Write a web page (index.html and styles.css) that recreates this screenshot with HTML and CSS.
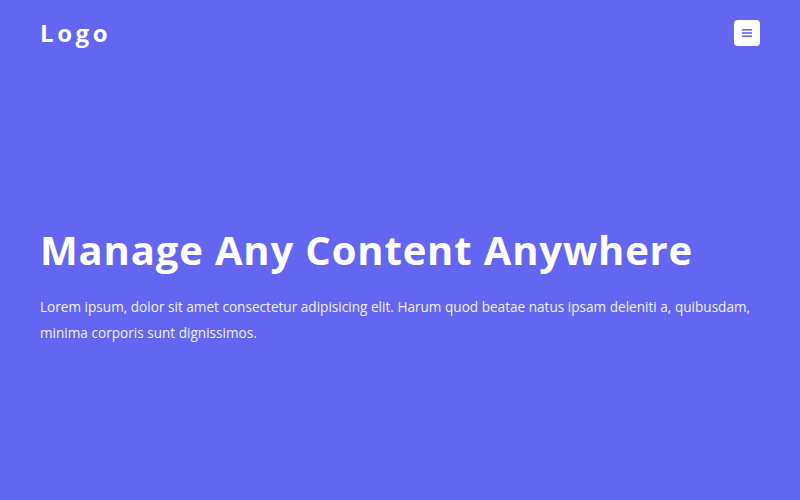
FILE: index.html
```html
<!DOCTYPE html>
<html lang="en">
<head>
<meta charset="utf-8">
<link rel="stylesheet" href="styles.css">
</head>
<body>
<div class="page">
  <header class="header">
    <div class="logo">Logo</div>
    <button class="menu-btn" aria-label="menu">
      <svg width="10" height="8" viewBox="0 0 10 8"><rect x="0" y="0" width="10" height="1.6" fill="#6366f1"/><rect x="0" y="3.2" width="10" height="1.6" fill="#6366f1"/><rect x="0" y="6.4" width="10" height="1.6" fill="#6366f1"/></svg>
    </button>
  </header>
  <main class="hero">
    <h1 class="title">Manage Any Content Anywhere</h1>
    <p class="lead">Lorem ipsum, dolor sit amet consectetur adipisicing elit. Harum quod beatae natus ipsam deleniti a, quibusdam, minima corporis sunt dignissimos.</p>
  </main>
</div>
</body>
</html>
```
FILE: styles.css
```css
* { box-sizing: border-box; }
html, body { margin: 0; padding: 0; }
body {
  background: #6366f1;
  font-family: "Open Sans", sans-serif;
  color: #fff;
}
.page {
  height: 500px;
  display: flex;
  flex-direction: column;
  padding: 0 40px;
}
.header {
  display: flex;
  justify-content: space-between;
  align-items: center;
  height: 66px;
}
.logo {
  font-size: 24px;
  font-weight: 700;
  letter-spacing: 3.6px;
  margin-top: -2px;
}
.menu-btn {
  width: 26px;
  height: 26px;
  border: none;
  border-radius: 4px;
  background: #fff;
  display: flex;
  align-items: center;
  justify-content: center;
  padding: 0;
}
.hero {
  padding-top: 156px;
}
.title {
  margin: 0;
  font-size: 40px;
  font-weight: 700;
  letter-spacing: 0.85px;
  line-height: 56px;
}
.lead {
  margin: 16px 0 0;
  font-size: 13.6px;
  line-height: 26px;
  color: #f1f2ff;
}
```
